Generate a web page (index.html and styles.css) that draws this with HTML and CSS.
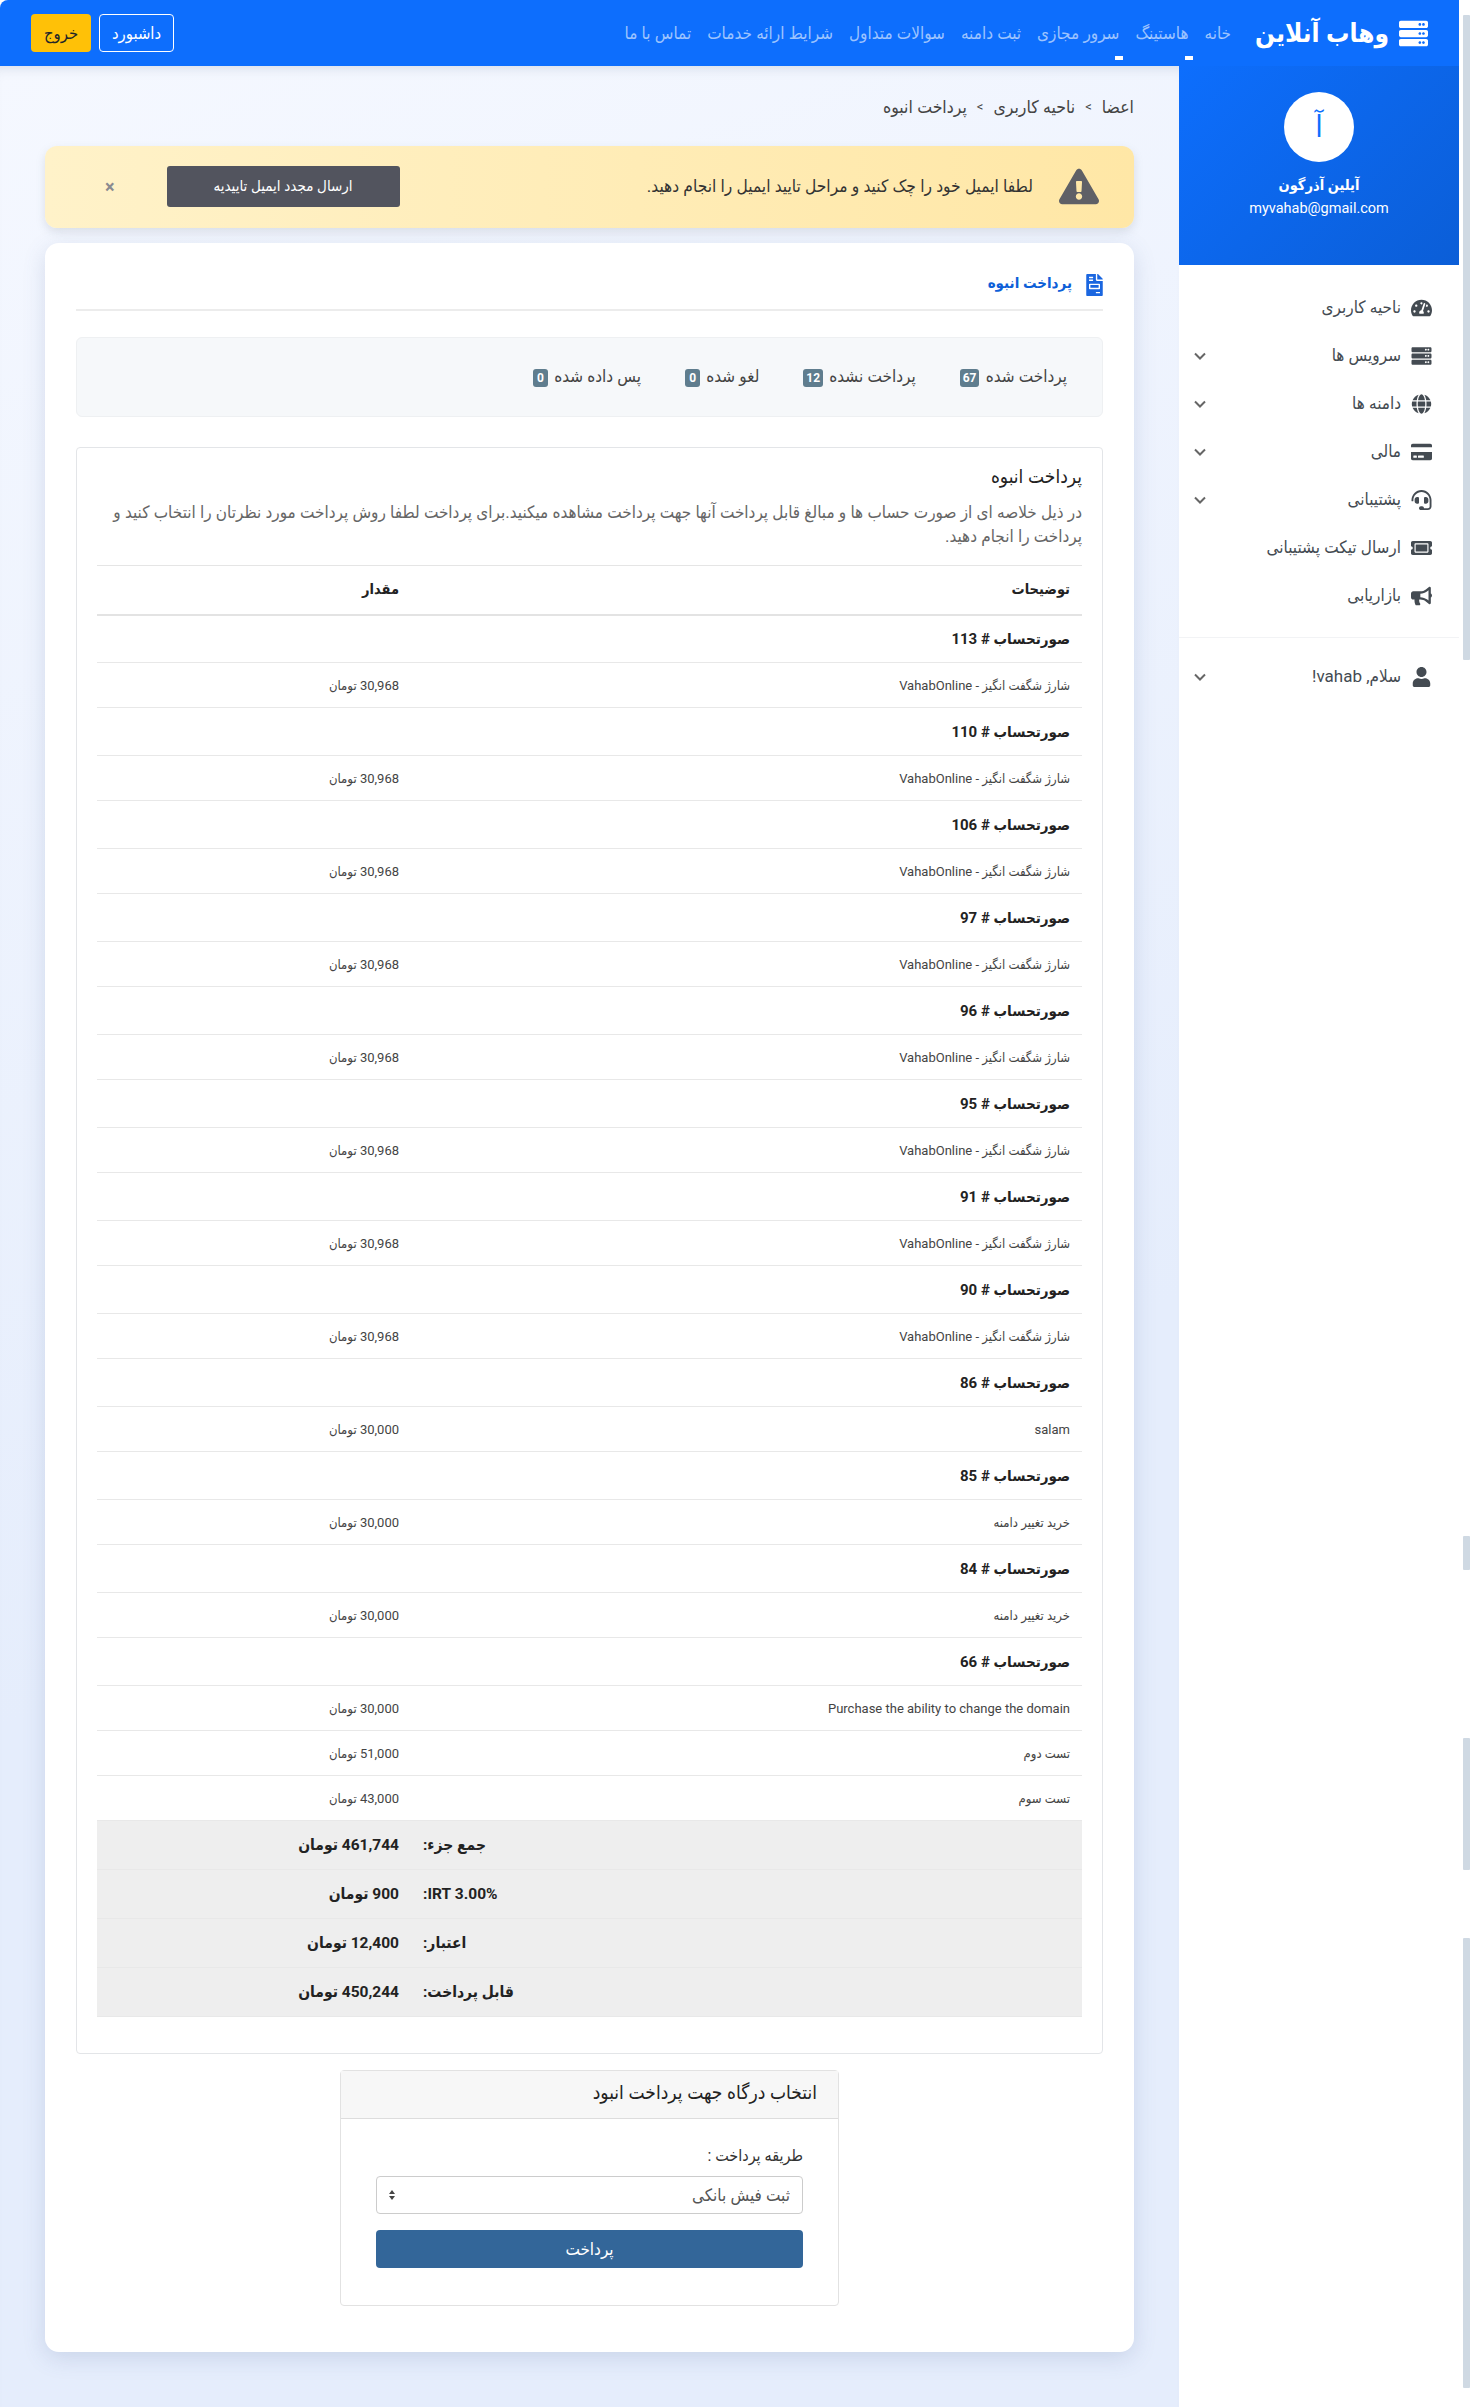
FILE: index.html
```html
<!DOCTYPE html>
<html lang="fa" dir="rtl">
<head>
  <meta charset="utf-8"/>
  <meta name="viewport" content="width=device-width,initial-scale=1"/>
  <title>پرداخت انبوه</title>
  <link rel="stylesheet" href="styles.css">
</head>
<body>
  <svg class="sprite" aria-hidden="true">
    <symbol id="i-server" viewBox="0 0 512 512"><path d="M480 160H32c-17.673 0-32-14.327-32-32V64c0-17.673 14.327-32 32-32h448c17.673 0 32 14.327 32 32v64c0 17.673-14.327 32-32 32zm-48-88c-13.255 0-24 10.745-24 24s10.745 24 24 24 24-10.745 24-24-10.745-24-24-24zm-64 0c-13.255 0-24 10.745-24 24s10.745 24 24 24 24-10.745 24-24-10.745-24-24-24zm112 248H32c-17.673 0-32-14.327-32-32v-64c0-17.673 14.327-32 32-32h448c17.673 0 32 14.327 32 32v64c0 17.673-14.327 32-32 32zm-48-88c-13.255 0-24 10.745-24 24s10.745 24 24 24 24-10.745 24-24-10.745-24-24-24zm-64 0c-13.255 0-24 10.745-24 24s10.745 24 24 24 24-10.745 24-24-10.745-24-24-24zm112 248H32c-17.673 0-32-14.327-32-32v-64c0-17.673 14.327-32 32-32h448c17.673 0 32 14.327 32 32v64c0 17.673-14.327 32-32 32zm-48-88c-13.255 0-24 10.745-24 24s10.745 24 24 24 24-10.745 24-24-10.745-24-24-24zm-64 0c-13.255 0-24 10.745-24 24s10.745 24 24 24 24-10.745 24-24-10.745-24-24-24z"/></symbol>
    <symbol id="i-gauge" viewBox="0 0 576 512"><path d="M288 32C128.940 32 0 160.940 0 320c0 52.800 14.250 102.260 39.060 144.800 5.610 9.620 16.300 15.200 27.440 15.200h443c11.140 0 21.830-5.580 27.440-15.200C561.750 422.260 576 372.800 576 320c0-159.060-128.940-288-288-288zm0 64c14.710 0 26.580 10.130 30.320 23.650-1.110 2.260-2.640 4.230-3.450 6.670l-9.220 27.670c-5.130 3.490-10.970 6.010-17.640 6.010-17.670 0-32-14.330-32-32S270.330 96 288 96zM96 384c-17.670 0-32-14.330-32-32s14.330-32 32-32 32 14.330 32 32-14.330 32-32 32zm48-160c-17.670 0-32-14.330-32-32s14.330-32 32-32 32 14.330 32 32-14.330 32-32 32zm246.770-72.410l-61.330 184C343.130 347.330 352 364.540 352 384c0 11.720-3.380 22.550-8.880 32H232.880c-5.500-9.450-8.880-20.280-8.880-32 0-33.940 26.500-61.430 59.900-63.590l61.340-184.010c4.170-12.560 17.730-19.450 30.360-15.170 12.570 4.190 19.350 17.770 15.170 30.360zm14.660 57.200l15.520-46.550c3.470-1.290 7.130-2.230 11.050-2.230 17.670 0 32 14.330 32 32s-14.330 32-32 32c-11.380-.01-20.890-6.280-26.570-15.220zM480 384c-17.670 0-32-14.330-32-32s14.330-32 32-32 32 14.330 32 32-14.330 32-32 32z"/></symbol>
    <symbol id="i-globe" viewBox="0 0 496 512"><path d="M336.500 160C322 70.700 287.800 8 248 8s-74 62.700-88.500 152h177zM152 256c0 22.200 1.200 43.500 3.300 64h185.300c2.100-20.500 3.300-41.800 3.300-64s-1.200-43.500-3.300-64H155.300c-2.100 20.500-3.300 41.800-3.300 64zm324.700-96c-28.600-67.900-86.500-120.400-158-141.600 24.400 33.800 41.200 84.700 50 141.600h108zM177.200 18.400C105.800 39.600 47.800 92.100 19.300 160h108c8.700-56.900 25.500-107.800 49.900-141.600zM487.400 192H372.700c2.100 21 3.300 42.500 3.300 64s-1.200 43-3.300 64h114.600c5.500-20.500 8.600-41.800 8.600-64s-3.100-43.500-8.500-64zM120 256c0-21.500 1.200-43 3.300-64H8.600C3.200 212.500 0 233.800 0 256s3.200 43.500 8.600 64h114.600c-2-21-3.200-42.500-3.200-64zm39.500 96c14.500 89.300 48.700 152 88.500 152s74-62.700 88.500-152h-177zm159.300 141.600c71.400-21.200 129.400-73.700 158-141.600h-108c-8.800 56.900-25.600 107.800-50 141.600zM19.300 352c28.600 67.900 86.500 120.400 158 141.600-24.400-33.800-41.200-84.700-50-141.600h-108z"/></symbol>
    <symbol id="i-card" viewBox="0 0 576 512"><path d="M0 432c0 26.500 21.500 48 48 48h480c26.500 0 48-21.500 48-48V256H0v176zm192-68c0-6.600 5.400-12 12-12h136c6.600 0 12 5.400 12 12v40c0 6.600-5.400 12-12 12H204c-6.600 0-12-5.400-12-12v-40zm-128 0c0-6.600 5.400-12 12-12h72c6.600 0 12 5.400 12 12v40c0 6.600-5.400 12-12 12H76c-6.600 0-12-5.400-12-12v-40zM576 80v48H0V80c0-26.500 21.500-48 48-48h480c26.500 0 48 21.500 48 48z"/></symbol>
    <symbol id="i-headset" viewBox="0 0 512 512"><path d="M192 208c0-17.670-14.330-32-32-32h-16c-35.350 0-64 28.650-64 64v48c0 35.350 28.650 64 64 64h16c17.670 0 32-14.330 32-32V208zm176 144c35.350 0 64-28.650 64-64v-48c0-35.350-28.650-64-64-64h-16c-17.670 0-32 14.330-32 32v112c0 17.670 14.330 32 32 32h16zM256 0C113.180 0 4.580 118.830 0 256v16c0 8.840 7.160 16 16 16h16c8.840 0 16-7.160 16-16v-16c0-114.690 93.310-208 208-208s208 93.310 208 208h-.12c.08 2.430.12 165.720.12 165.720 0 23.350-18.930 42.280-42.280 42.280H320c0-26.510-21.490-48-48-48h-32c-26.510 0-48 21.490-48 48s21.490 48 48 48h181.720c49.860 0 90.280-40.420 90.280-90.280V256C507.420 118.830 398.820 0 256 0z"/></symbol>
    <symbol id="i-ticket" viewBox="0 0 576 512"><path d="M128 160h320v192H128V160zm400 96c0 26.510 21.490 48 48 48v96c0 26.510-21.490 48-48 48H48c-26.510 0-48-21.490-48-48v-96c26.510 0 48-21.490 48-48s-21.490-48-48-48v-96c0-26.510 21.490-48 48-48h480c26.510 0 48 21.490 48 48v96c-26.510 0-48 21.490-48 48zm-48-104c0-13.255-10.745-24-24-24H120c-13.255 0-24 10.745-24 24v208c0 13.255 10.745 24 24 24h336c13.255 0 24-10.745 24-24V152z"/></symbol>
    <symbol id="i-bullhorn" viewBox="0 0 576 512"><path d="M576 240c0-23.630-12.950-44.040-32-55.120V32.010C544 23.260 537.020 0 512 0c-7.120 0-14.190 2.380-19.980 7.020l-85.030 68.030C364.280 109.190 310.660 128 256 128H64c-35.350 0-64 28.650-64 64v96c0 35.350 28.650 64 64 64h33.700c-1.390 10.480-2.180 21.140-2.180 32 0 39.770 9.260 77.350 25.560 110.940 5.190 10.690 16.520 17.060 28.400 17.060h74.280c26.050 0 41.690-29.840 25.900-50.560-16.400-21.520-26.150-48.360-26.150-77.440 0-11.110 1.620-21.790 4.410-32H256c54.660 0 108.280 18.810 150.980 52.950l85.030 68.030a32.023 32.023 0 0 0 19.980 7.020c24.920 0 32-22.780 32-32V295.130C563.050 284.040 576 263.630 576 240zm-96 141.420l-33.050-26.440C392.950 311.780 325.120 288 256 288v-96c69.120 0 136.950-23.780 190.950-66.980L480 98.580v282.840z"/></symbol>
    <symbol id="i-user" viewBox="0 0 448 512"><path d="M224 256c70.700 0 128-57.300 128-128S294.700 0 224 0 96 57.300 96 128s57.300 128 128 128zm89.600 32h-16.700c-22.200 10.200-46.900 16-72.900 16s-50.600-5.800-72.900-16h-16.700C60.200 288 0 348.200 0 422.400V464c0 26.500 21.500 48 48 48h352c26.500 0 48-21.500 48-48v-41.600c0-74.200-60.200-134.400-134.400-134.400z"/></symbol>
    <symbol id="i-chevron" viewBox="0 0 12 8"><path d="M1 1.500l5 5 5-5" fill="none" stroke="currentColor" stroke-width="2"/></symbol>
    <symbol id="i-warning" viewBox="0 0 576 512"><path d="M569.517 440.013C587.975 472.007 564.806 512 527.940 512H48.054c-36.937 0-59.999-40.055-41.577-71.987L246.423 23.985c18.467-32.009 64.720-31.951 83.154 0l239.940 416.028zM288 354c-25.405 0-46 20.595-46 46s20.595 46 46 46 46-20.595 46-46-20.595-46-46-46zm-43.673-165.346l7.418 136c.347 6.364 5.609 11.346 11.982 11.346h48.546c6.373 0 11.635-4.982 11.982-11.346l7.418-136c.375-6.874-5.098-12.654-11.982-12.654h-63.383c-6.884 0-12.356 5.780-11.981 12.654z"/></symbol>
    <symbol id="i-doc" viewBox="0 0 384 512"><path d="M288 256H96v64h192v-64zm89-151L279.100 7c-4.500-4.500-10.600-7-17-7H256v128h128v-6.100c0-6.300-2.500-12.400-7-16.900zm-153 31V0H24C10.700 0 0 10.700 0 24v464c0 13.300 10.700 24 24 24h336c13.300 0 24-10.700 24-24V160H248c-13.200 0-24-10.800-24-24zM64 72c0-4.400 3.600-8 8-8h80c4.400 0 8 3.600 8 8v16c0 4.400-3.600 8-8 8H72c-4.400 0-8-3.600-8-8V72zm0 64c0-4.400 3.600-8 8-8h80c4.400 0 8 3.600 8 8v16c0 4.400-3.600 8-8 8H72c-4.400 0-8-3.600-8-8v-16zm256 304c0 4.400-3.600 8-8 8h-80c-4.400 0-8-3.600-8-8v-16c0-4.400 3.600-8 8-8h80c4.400 0 8 3.600 8 8v16zm0-200v96c0 8.800-7.200 16-16 16H80c-8.800 0-16-7.200-16-16v-96c0-8.800 7.200-16 16-16h224c8.800 0 16 7.200 16 16z"/></symbol>
  </svg>

  <div class="scroll-track" aria-hidden="true">
    <span class="thumb thumb-a"></span>
    <span class="thumb thumb-b"></span>
    <span class="thumb thumb-c"></span>
    <span class="thumb thumb-d"></span>
  </div>

  <div class="app">
    <header class="topbar">
      <a class="brand" href="#">
        <svg class="brand-icon"><use href="#i-server"/></svg>
        <span>وهاب آنلاین</span>
      </a>
      <nav class="topnav">
        <a href="#">خانه</a>
        <a href="#" class="has-tick">هاستینگ</a>
        <a href="#" class="has-tick">سرور مجازی</a>
        <a href="#">ثبت دامنه</a>
        <a href="#">سوالات متداول</a>
        <a href="#">شرایط ارائه خدمات</a>
        <a href="#">تماس با ما</a>
      </nav>
      <div class="top-actions">
        <a class="btn-outline" href="#">داشبورد</a>
        <a class="btn-yellow" href="#">خروج</a>
      </div>
    </header>

    <div class="layout">
      <aside class="sidebar">
        <div class="profile">
          <div class="avatar">آ</div>
          <div class="profile-name">آیلین آذرگون</div>
          <div class="profile-mail">myvahab@gmail.com</div>
        </div>
        <ul class="side-menu">
          <li><svg class="side-icon"><use href="#i-gauge"/></svg><span>ناحیه کاربری</span></li>
          <li><svg class="side-icon"><use href="#i-server"/></svg><span>سرویس ها</span><svg class="chev"><use href="#i-chevron"/></svg></li>
          <li><svg class="side-icon"><use href="#i-globe"/></svg><span>دامنه ها</span><svg class="chev"><use href="#i-chevron"/></svg></li>
          <li><svg class="side-icon"><use href="#i-card"/></svg><span>مالی</span><svg class="chev"><use href="#i-chevron"/></svg></li>
          <li><svg class="side-icon"><use href="#i-headset"/></svg><span>پشتیبانی</span><svg class="chev"><use href="#i-chevron"/></svg></li>
          <li><svg class="side-icon"><use href="#i-ticket"/></svg><span>ارسال تیکت پشتیبانی</span></li>
          <li><svg class="side-icon"><use href="#i-bullhorn"/></svg><span>بازاریابی</span></li>
        </ul>
        <ul class="side-menu side-user">
          <li><svg class="side-icon"><use href="#i-user"/></svg><span>سلام, vahab!</span><svg class="chev"><use href="#i-chevron"/></svg></li>
        </ul>
      </aside>

      <main class="main">
        <div class="crumbs">
          <a href="#">اعضا</a><i>&gt;</i><a href="#">ناحیه کاربری</a><i>&gt;</i><span>پرداخت انبوه</span>
        </div>

        <div class="alert">
          <svg class="alert-icon"><use href="#i-warning"/></svg>
          <p>لطفا ایمیل خود را چک کنید و مراحل تایید ایمیل را انجام دهید.</p>
          <a class="btn-dark" href="#">ارسال مجدد ایمیل تاییدیه</a>
          <span class="alert-close">×</span>
        </div>

        <section class="card">
          <h2 class="card-title"><svg class="doc-icon"><use href="#i-doc"/></svg>پرداخت انبوه</h2>

          <div class="stats">
            <span>پرداخت شده <b>67</b></span>
            <span>پرداخت نشده <b>12</b></span>
            <span>لغو شده <b>0</b></span>
            <span>پس داده شده <b>0</b></span>
          </div>

          <div class="panel">
            <h3>پرداخت انبوه</h3>
            <p class="lead">در ذیل خلاصه ای از صورت حساب ها و مبالغ قابل پرداخت آنها جهت پرداخت مشاهده میکنید.برای پرداخت لطفا روش پرداخت مورد نظرتان را انتخاب کنید و پرداخت را انجام دهید.</p>
            <table class="invoices">
              <thead>
                <tr><th>توضیحات</th><th class="col-amount">مقدار</th></tr>
              </thead>
              <tbody>
                <tr class="group"><td colspan="2">صورتحساب # 113</td></tr>
                <tr><td>شارژ شگفت انگیز - VahabOnline</td><td>30,968 تومان</td></tr>
                <tr class="group"><td colspan="2">صورتحساب # 110</td></tr>
                <tr><td>شارژ شگفت انگیز - VahabOnline</td><td>30,968 تومان</td></tr>
                <tr class="group"><td colspan="2">صورتحساب # 106</td></tr>
                <tr><td>شارژ شگفت انگیز - VahabOnline</td><td>30,968 تومان</td></tr>
                <tr class="group"><td colspan="2">صورتحساب # 97</td></tr>
                <tr><td>شارژ شگفت انگیز - VahabOnline</td><td>30,968 تومان</td></tr>
                <tr class="group"><td colspan="2">صورتحساب # 96</td></tr>
                <tr><td>شارژ شگفت انگیز - VahabOnline</td><td>30,968 تومان</td></tr>
                <tr class="group"><td colspan="2">صورتحساب # 95</td></tr>
                <tr><td>شارژ شگفت انگیز - VahabOnline</td><td>30,968 تومان</td></tr>
                <tr class="group"><td colspan="2">صورتحساب # 91</td></tr>
                <tr><td>شارژ شگفت انگیز - VahabOnline</td><td>30,968 تومان</td></tr>
                <tr class="group"><td colspan="2">صورتحساب # 90</td></tr>
                <tr><td>شارژ شگفت انگیز - VahabOnline</td><td>30,968 تومان</td></tr>
                <tr class="group"><td colspan="2">صورتحساب # 86</td></tr>
                <tr><td>salam</td><td>30,000 تومان</td></tr>
                <tr class="group"><td colspan="2">صورتحساب # 85</td></tr>
                <tr><td>خرید تغییر دامنه</td><td>30,000 تومان</td></tr>
                <tr class="group"><td colspan="2">صورتحساب # 84</td></tr>
                <tr><td>خرید تغییر دامنه</td><td>30,000 تومان</td></tr>
                <tr class="group"><td colspan="2">صورتحساب # 66</td></tr>
                <tr><td>Purchase the ability to change the domain</td><td>30,000 تومان</td></tr>
                <tr><td>تست دوم</td><td>51,000 تومان</td></tr>
                <tr><td>تست سوم</td><td>43,000 تومان</td></tr>
                <tr class="sum"><td>جمع جزء:</td><td>461,744 تومان</td></tr>
                <tr class="sum"><td>3.00% IRT:</td><td>900 تومان</td></tr>
                <tr class="sum"><td>اعتبار:</td><td>12,400 تومان</td></tr>
                <tr class="sum"><td>قابل پرداخت:</td><td>450,244 تومان</td></tr>
              </tbody>
            </table>
          </div>

          <form class="pay-box">
            <div class="pay-head">انتخاب درگاه جهت پرداخت انبود</div>
            <div class="pay-body">
              <label for="gateway">طریقه پرداخت :</label>
              <div class="select-wrap">
                <select id="gateway"><option>ثبت فیش بانکی</option></select>
              </div>
              <button type="button">پرداخت</button>
            </div>
          </form>
        </section>
      </main>
    </div>
  </div>
</body>
</html>
```

FILE: styles.css
```css
* { box-sizing: border-box; }
html, body { margin: 0; height: 100%; }
body {
  display: flex;
  min-height: 2407px;
  font-family: Roboto, "DejaVu Sans Condensed", "DejaVu Sans", sans-serif;
  font-size: 14px;
  color: #333;
  background: #fff;
}
a { color: inherit; text-decoration: none; }
.sprite { display: none; }

/* page scrollbar as in the shot */
.scroll-track {
  flex: 0 0 15px;
  display: flex;
  flex-direction: column;
  padding: 15px 4px 0;
}
.thumb { display: block; background: #cfd9e3; border-radius: 1px; }
.thumb-a { height: 645px; }
.thumb-b { height: 34px; margin-top: 876px; }
.thumb-c { height: 132px; margin-top: 168px; }
.thumb-d { height: 450px; margin-top: 68px; }

.app { flex: 1; min-width: 0; display: flex; flex-direction: column; }

/* top bar */
.topbar {
  height: 66px;
  flex: none;
  display: flex;
  align-items: center;
  padding: 0 31px;
  background: #0d6efd;
  border-top-left-radius: 8px;
}
.brand { display: flex; align-items: center; gap: 10px; color: #fff; font-weight: 700; font-size: 26px; }
.brand-icon { width: 29px; height: 29px; fill: #fff; }
.topnav { display: flex; gap: 16px; margin-right: 24px; font-size: 17px; }
.topnav a { position: relative; color: rgba(255, 255, 255, .6); }
.has-tick::after {
  content: "";
  position: absolute;
  right: -4px;
  top: 33px;
  width: 8px;
  height: 4px;
  background: #fff;
}
.top-actions { margin-right: auto; display: flex; gap: 8px; }
.btn-outline, .btn-yellow {
  height: 38px;
  display: flex;
  align-items: center;
  justify-content: center;
  border-radius: 4px;
  font-size: 16.5px;
}
.btn-outline { width: 75px; border: 1px solid #fff; color: #fff; }
.btn-yellow { width: 60px; background: #ffc107; color: #212529; }

.layout { flex: 1; display: flex; }

/* sidebar */
.sidebar { flex: 0 0 280px; background: #fff; }
.profile {
  height: 199px;
  padding-top: 26px;
  text-align: center;
  color: #fff;
  background: linear-gradient(135deg, #0d6efd, #0b5ed7);
}
.avatar {
  width: 70px;
  height: 70px;
  margin: 0 auto 14px;
  border-radius: 50%;
  background: #fff;
  color: #0d6efd;
  font-size: 30px;
  line-height: 70px;
}
.profile-name { font-weight: 700; font-size: 14.5px; line-height: 20px; }
.profile-mail { font-size: 14.5px; line-height: 20px; margin-top: 3px; }
.side-menu { list-style: none; margin: 0; padding: 19px 0 17px; border-bottom: 1px solid #f2f3f5; }
.side-menu li {
  height: 48px;
  display: flex;
  align-items: center;
  padding: 0 27px 0 15px;
  color: #444b52;
  font-size: 17px;
}
.side-menu li span { margin-top: -2px; }
.side-user { border: 0; padding: 15px 0; }
.side-icon { width: 21px; height: 20px; fill: #444b52; margin-left: 10px; flex: none; }
.chev { width: 12px; height: 8px; margin-right: auto; color: #666; }

/* main column */
.main {
  flex: 1;
  min-width: 0;
  padding: 32px 45px 55px;
  background: linear-gradient(160deg, #f5f8ff, #e5edfc 60%);
  box-shadow: inset 0 12px 14px -12px rgba(90, 110, 140, .25);
}
.crumbs { height: 18px; line-height: 18px; margin-bottom: 30px; display: flex; font-size: 17.5px; color: #444; }
.crumbs i { font-style: normal; margin: 0 10px; font-size: 13px; }

.alert {
  height: 82px;
  display: flex;
  align-items: center;
  padding: 0 35px 2px 60px;
  border-radius: 12px;
  background: linear-gradient(270deg, #ffe7a6, #fff2c9);
  box-shadow: 0 4px 10px rgba(120, 130, 140, .2);
}
.alert-icon { width: 40px; height: 37px; fill: #5f6066; margin-left: 26px; }
.alert p { margin: 0; font-size: 17.2px; color: #333; }
.btn-dark {
  width: 233px;
  height: 41px;
  margin-right: auto;
  display: flex;
  align-items: center;
  justify-content: center;
  background: #52545e;
  color: #fff;
  border-radius: 3px;
  font-size: 15px;
}
.alert-close { margin-right: 52px; font-size: 18px; font-weight: 700; color: #8a8a90; }

.card {
  margin-top: 15px;
  padding: 31px 31px 46px;
  background: #fff;
  border-radius: 14px;
  box-shadow: 0 6px 22px rgba(80, 100, 150, .18);
}
.card-title {
  display: flex;
  gap: 14px;
  margin: 0 0 26px;
  height: 37px;
  border-bottom: 2px solid #ececec;
  color: #0d5fd8;
  font-size: 15px;
  line-height: 19px;
}
.doc-icon { width: 17px; height: 22px; fill: #1a66e0; flex: none; }

.stats {
  height: 80px;
  display: flex;
  align-items: center;
  gap: 44px;
  padding: 0 35px 1px;
  background: #f6f8fa;
  border: 1px solid #eef0f2;
  border-radius: 6px;
  font-size: 17px;
  color: #444;
}
.stats b {
  display: inline-block;
  min-width: 15px;
  padding: 0 3px;
  height: 18px;
  line-height: 18px;
  margin-right: 2px;
  text-align: center;
  border-radius: 3px;
  background: #5f7d8e;
  color: #fff;
  font-size: 12px;
}

.panel {
  margin-top: 30px;
  padding: 20px 20px 36px;
  border: 1px solid #e3e5e8;
  border-radius: 4px;
}
.panel h3 { margin: 0; font-size: 19px; line-height: 18px; font-weight: 400; color: #222; }
.lead { margin: 14px 0 17px; font-size: 17px; line-height: 24px; color: #666; }

.invoices { width: 100%; border-collapse: collapse; font-size: 13px; color: #444; }
.invoices th { height: 49px; padding: 0 12px; text-align: right; font-size: 14.5px; color: #222; border-top: 1px solid #e5e5e5; border-bottom: 2px solid #e3e3e3; }
.invoices .col-amount { width: 314px; }
.invoices td { height: 45px; padding: 0 12px; border-bottom: 1px solid #e8e8e8; }
.invoices .group td { height: 48px; font-size: 15px; font-weight: 700; color: #222; }
.invoices .sum td { height: 49px; background: #eeeeee; font-size: 15.5px; font-weight: 700; color: #222; }
.invoices .sum td:first-child { text-align: left; }

.pay-box {
  width: 499px;
  margin: 16px auto 0;
  border: 1px solid #e2e2e2;
  border-radius: 4px;
}
.pay-head {
  height: 48px;
  line-height: 44px;
  padding: 0 21px;
  background: #f7f7f7;
  border-bottom: 1px solid #ddd;
  font-size: 19px;
  color: #222;
}
.pay-body { padding: 25px 35px 37px; }
.pay-body label { display: block; font-size: 16px; line-height: 24px; color: #333; margin-bottom: 8px; }
.select-wrap { position: relative; }
.select-wrap::before, .select-wrap::after {
  content: "";
  position: absolute;
  left: 13px;
  border: 4px solid transparent;
  border-right-width: 3.5px;
  border-left-width: 3.5px;
}
.select-wrap::before { top: 14px; border-top-width: 0; border-bottom-color: #444; }
.select-wrap::after { top: 20px; border-bottom-width: 0; border-top-color: #444; }
.select-wrap select {
  appearance: none;
  display: block;
  width: 100%;
  height: 38px;
  padding: 0 12px;
  font: inherit;
  font-size: 17px;
  color: #555;
  background: #fff;
  border: 1px solid #ccc;
  border-radius: 4px;
}
.pay-body button {
  width: 100%;
  height: 38px;
  margin-top: 16px;
  border: 0;
  border-radius: 4px;
  background: #336699;
  color: #fff;
  font: inherit;
  font-size: 17px;
}
```
